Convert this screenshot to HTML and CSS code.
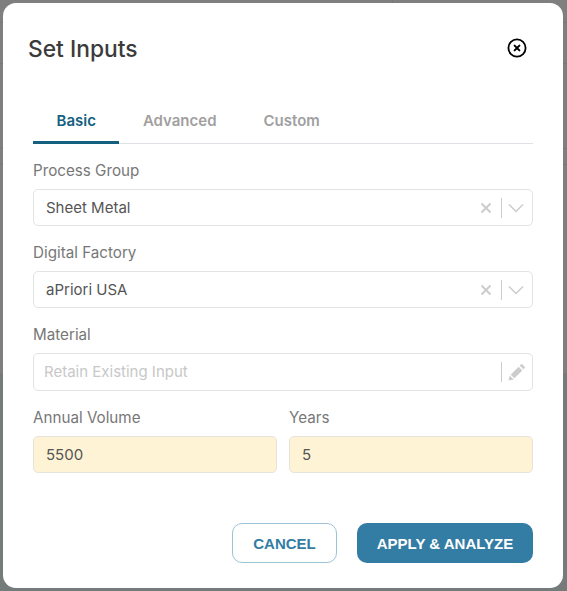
FILE: index.html
```html
<!DOCTYPE html>
<html lang="en">
<head>
  <meta charset="UTF-8">
  <meta name="viewport" content="width=device-width, initial-scale=1.0">
  <title>Set Inputs</title>
  <link rel="stylesheet" href="styles.css">
</head>
<body>
  <div class="modal">
    <div class="modal-header">
      <h1>Set Inputs</h1>
      <svg class="close-icon" width="20" height="20" viewBox="0 0 20 20" aria-label="Close">
        <circle cx="10" cy="10" r="8.6" fill="none" stroke="#000" stroke-width="1.8"/>
        <path d="M7.6 7.6l4.8 4.8M12.4 7.6l-4.8 4.8" stroke="#000" stroke-width="2" stroke-linecap="round"/>
      </svg>
    </div>

    <div class="tabs">
      <div class="tab active">Basic</div>
      <div class="tab">Advanced</div>
      <div class="tab">Custom</div>
    </div>

    <div class="field">
      <label>Process Group</label>
      <div class="input">
        <span class="value">Sheet Metal</span>
        <svg class="clear-icon" width="12" height="12" viewBox="0 0 12 12"><path d="M1.5 1.5l9 9M10.5 1.5l-9 9" stroke="#ccc" stroke-width="2"/></svg>
        <span class="divider"></span>
        <svg class="chevron" width="16" height="10" viewBox="0 0 16 10"><path d="M1 1.5l7 7 7-7" fill="none" stroke="#ccc" stroke-width="1.5"/></svg>
      </div>
    </div>

    <div class="field">
      <label>Digital Factory</label>
      <div class="input">
        <span class="value">aPriori USA</span>
        <svg class="clear-icon" width="12" height="12" viewBox="0 0 12 12"><path d="M1.5 1.5l9 9M10.5 1.5l-9 9" stroke="#ccc" stroke-width="2"/></svg>
        <span class="divider"></span>
        <svg class="chevron" width="16" height="10" viewBox="0 0 16 10"><path d="M1 1.5l7 7 7-7" fill="none" stroke="#ccc" stroke-width="1.5"/></svg>
      </div>
    </div>

    <div class="field">
      <label>Material</label>
      <div class="input material">
        <span class="value placeholder">Retain Existing Input</span>
        <span class="divider"></span>
        <svg class="pencil" width="17" height="17" viewBox="0 0 16 16"><path d="M0.5 15.5l1-4.5 4 3.5zM2.5 10l7.5-7.5 3.5 3.5-7.5 7.5zM11 1.5l1-1a1.2 1.2 0 0 1 1.7 0l1.8 1.8a1.2 1.2 0 0 1 0 1.7l-1 1z" fill="#ccc"/></svg>
      </div>
    </div>

    <div class="field-row">
      <div class="field">
        <label>Annual Volume</label>
        <div class="input filled"><span class="value">5500</span></div>
      </div>
      <div class="field">
        <label>Years</label>
        <div class="input filled"><span class="value">5</span></div>
      </div>
    </div>

    <div class="actions">
      <button class="btn btn-outline">CANCEL</button>
      <button class="btn btn-primary">APPLY &amp; ANALYZE</button>
    </div>
  </div>
</body>
</html>
```

FILE: styles.css
```css
* {
  box-sizing: border-box;
  margin: 0;
  padding: 0;
}
html, body {
  height: 591px;
  overflow: hidden;
}
/* dimmed page behind the dialog */
body {
  background:
    linear-gradient(#777, #777) 0 22px / 100% 1px no-repeat,
    linear-gradient(#777, #777) 0 63px / 100% 1px no-repeat,
    linear-gradient(#777, #777) 0 148px / 100% 1px no-repeat,
    linear-gradient(#777, #777) 0 164px / 100% 1px no-repeat,
    linear-gradient(#777, #777) 392px 0 / 1px 3px no-repeat,
    linear-gradient(#7f7f7f 373px, #757a7a 373px);
  font-family: Inter, "Liberation Sans", sans-serif;
  padding: 3px 4px 3px 3px;
}
.modal {
  height: 585px;
  background: #fff;
  border-radius: 13px;
  padding: 0 30px 0 30px;
  display: flex;
  flex-direction: column;
}
.modal-header {
  display: flex;
  align-items: center;
  justify-content: space-between;
  height: 90px;
  margin-left: -5px;
  margin-right: 6px;
}
.modal-header h1 {
  font-size: 22.8px;
  font-weight: 500;
  color: #3b3b3b;
}
.close-icon {
  display: block;
}
/* tabs */
.tabs {
  display: flex;
  height: 51px;
  border-bottom: 1px solid #dee2e6;
  margin-bottom: 16px;
}
.tab {
  font-size: 15px;
  font-weight: 600;
  color: #a0a0a0;
  line-height: 55px;
  height: 50px;
  padding: 0 23.5px;
}
.tab.active {
  color: #14607f;
  border-bottom: 3px solid #14607f;
  height: 51px;
}
/* form */
.field {
  margin-bottom: 16px;
}
.field label {
  display: block;
  font-size: 15.2px;
  color: #777;
  line-height: 21px;
  margin-bottom: 8px;
}
.input {
  display: flex;
  align-items: center;
  height: 37px;
  border: 1px solid #e3e3e3;
  border-radius: 5px;
  padding: 0 8px 0 12px;
  font-size: 15px;
  color: #555;
}
.input .value {
  flex: 1;
}
.input .placeholder {
  color: #c8c8c8;
  margin-left: -2px;
  margin-top: -1px;
}
.material {
  height: 38px;
  padding-right: 7px;
}
.clear-icon {
  margin-right: 9px;
}
.divider {
  width: 1px;
  height: 20px;
  background: #ccc;
  margin-right: 6px;
}
.field-row {
  display: grid;
  grid-template-columns: 244px 244px;
  gap: 12px;
}
.filled {
  background: #fff3d6;
  border-color: #e6e3da;
}
.actions {
  display: flex;
  justify-content: flex-end;
  gap: 20px;
  margin-top: 34px;
}
.btn {
  height: 40px;
  border-radius: 10px;
  font-family: "Liberation Sans", Arial, sans-serif;
  font-size: 15px;
  font-weight: 700;
}
.btn-outline {
  width: 105px;
  background: #fff;
  color: #337ca3;
  border: 1px solid #9cc3d8;
}
.btn-primary {
  width: 176px;
  background: #337ca3;
  color: #fff;
  border: 0;
}
```
